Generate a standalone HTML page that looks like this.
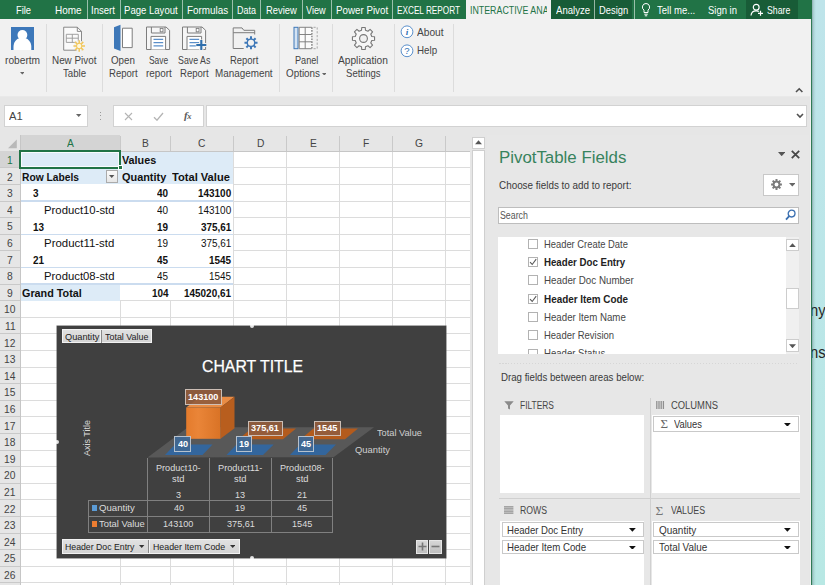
<!DOCTYPE html>
<html lang="en"><head><meta charset="utf-8"><title>Excel - PivotTable Fields</title>
<style>
html,body{margin:0;padding:0}
body{width:825px;height:585px;overflow:hidden;position:relative;background:#e6e6e6;font-family:"Liberation Sans",sans-serif;color:#444}
.a{position:absolute}
.t{position:absolute;white-space:nowrap;line-height:1;transform-origin:0 0}
</style></head>
<body>
<div class="a" style="left:811px;top:0px;width:14px;height:585px;background:linear-gradient(180deg,#bee4ea 0,#bbe6e8 45%,#b8e8e4 100%);"></div>
<div class="a" style="left:811.9px;top:0px;width:4.1px;height:585px;background:linear-gradient(90deg,rgba(70,100,95,.42) 0,rgba(90,130,125,.16) 45%,rgba(120,160,155,0) 100%);"></div>
<div class="t" style="left:810.3px;top:303px;font-size:15.6px;transform:scaleX(0.95);color:#262626;">ny</div>
<div class="t" style="left:810.3px;top:345px;font-size:15.6px;transform:scaleX(0.95);color:#262626;">nsi</div>
<div class="a" style="left:0px;top:0px;width:812px;height:19px;background:#217346;"></div>
<div class="a" style="left:551px;top:0px;width:81px;height:19px;background:#185c37;"></div>
<div class="a" style="left:746px;top:0px;width:51.7px;height:19px;background:#185c37;"></div>
<div class="a" style="left:466px;top:0px;width:85px;height:19.5px;background:#f1f1f1;overflow:hidden;"></div>
<div class="t" style="left:15.7px;top:5.6px;font-size:10.4px;transform:scaleX(0.9);color:#fff;">File</div>
<div class="t" style="left:55px;top:5.6px;font-size:10.4px;transform:scaleX(0.96);color:#fff;">Home</div>
<div class="t" style="left:91px;top:5.6px;font-size:10.4px;transform:scaleX(0.92);color:#fff;">Insert</div>
<div class="t" style="left:124px;top:5.6px;font-size:10.4px;transform:scaleX(0.92);color:#fff;">Page Layout</div>
<div class="t" style="left:187.3px;top:5.6px;font-size:10.4px;transform:scaleX(0.95);color:#fff;">Formulas</div>
<div class="t" style="left:237px;top:5.6px;font-size:10.4px;transform:scaleX(0.86);color:#fff;">Data</div>
<div class="t" style="left:266px;top:5.6px;font-size:10.4px;transform:scaleX(0.9);color:#fff;">Review</div>
<div class="t" style="left:306px;top:5.6px;font-size:10.4px;transform:scaleX(0.88);color:#fff;">View</div>
<div class="t" style="left:335.7px;top:5.6px;font-size:10.4px;transform:scaleX(0.94);color:#fff;">Power Pivot</div>
<div class="t" style="left:397.3px;top:5.6px;font-size:10.4px;transform:scaleX(0.79);color:#fff;">EXCEL REPORT</div>
<div class="t" style="left:556px;top:5.6px;font-size:10.4px;transform:scaleX(0.92);color:#fff;">Analyze</div>
<div class="t" style="left:599.3px;top:5.6px;font-size:10.4px;transform:scaleX(0.9);color:#fff;">Design</div>
<div class="t" style="left:656.7px;top:5.6px;font-size:10.4px;transform:scaleX(0.92);color:#fff;">Tell me...</div>
<div class="t" style="left:707.7px;top:5.6px;font-size:10.4px;transform:scaleX(0.91);color:#fff;">Sign in</div>
<div class="t" style="left:767.3px;top:5.6px;font-size:10.4px;transform:scaleX(0.84);color:#fff;">Share</div>
<div class="a" style="left:466px;top:0;width:81.4px;height:19px;overflow:hidden;"><div class="t" style="left:4px;top:5.6px;font-size:10.4px;color:#217346;transform:scaleX(0.85);">INTERACTIVE ANALYSIS</div></div>
<div class="a" style="left:86.8px;top:0px;width:1px;height:19px;background:rgba(255,255,255,.55);"></div>
<div class="a" style="left:119.8px;top:0px;width:1px;height:19px;background:rgba(255,255,255,.55);"></div>
<div class="a" style="left:181.8px;top:0px;width:1px;height:19px;background:rgba(255,255,255,.55);"></div>
<div class="a" style="left:231.8px;top:0px;width:1px;height:19px;background:rgba(255,255,255,.55);"></div>
<div class="a" style="left:260.2px;top:0px;width:1px;height:19px;background:rgba(255,255,255,.55);"></div>
<div class="a" style="left:301.8px;top:0px;width:1px;height:19px;background:rgba(255,255,255,.55);"></div>
<div class="a" style="left:331.2px;top:0px;width:1px;height:19px;background:rgba(255,255,255,.55);"></div>
<div class="a" style="left:391.8px;top:0px;width:1px;height:19px;background:rgba(255,255,255,.55);"></div>
<div class="a" style="left:593.8px;top:0px;width:1px;height:19px;background:rgba(255,255,255,.55);"></div>
<div class="a" style="left:633.8px;top:0px;width:1px;height:19px;background:rgba(255,255,255,.55);"></div>
<svg class="a" style="left:640px;top:2px" width="12" height="16" viewBox="0 0 12 16"><path d="M6 1.5a3.6 3.6 0 0 0-2 6.6V10.5h4V8.1a3.6 3.6 0 0 0-2-6.6z" fill="none" stroke="#fff" stroke-width="1"/><path d="M4.3 12.2h3.4M4.8 13.8h2.4" stroke="#fff" stroke-width="1"/></svg>
<svg class="a" style="left:750px;top:3px" width="14" height="14" viewBox="0 0 14 14"><circle cx="6.2" cy="4.2" r="2.9" fill="none" stroke="#fff" stroke-width="1.2"/><path d="M1 12.5c.3-3 2.2-4.6 5.2-4.6 1 0 1.9.2 2.6.6" fill="none" stroke="#fff" stroke-width="1.2"/><path d="M10.5 7.8v5M8 10.3h5" stroke="#fff" stroke-width="1.2"/></svg>
<div class="a" style="left:0px;top:19px;width:810.5px;height:77px;background:#f1f1f1;"></div>
<div class="a" style="left:0px;top:95.6px;width:810.5px;height:1px;background:#e9e9e9;"></div>
<div class="a" style="left:45.7px;top:24px;width:1px;height:68px;background:#dcdcdc;"></div>
<div class="a" style="left:102px;top:24px;width:1px;height:68px;background:#dcdcdc;"></div>
<div class="a" style="left:279px;top:24px;width:1px;height:68px;background:#dcdcdc;"></div>
<div class="a" style="left:332px;top:24px;width:1px;height:68px;background:#dcdcdc;"></div>
<div class="a" style="left:394px;top:24px;width:1px;height:68px;background:#dcdcdc;"></div>
<div class="a" style="left:453.2px;top:24px;width:1px;height:68px;background:#dcdcdc;"></div>
<div class="t" style="left:4.5px;top:55.6px;font-size:10.4px;transform:scaleX(0.98);color:#444;">robertm</div>
<div class="t" style="left:51.7px;top:55.6px;font-size:10.4px;transform:scaleX(0.95);color:#444;">New Pivot</div>
<div class="t" style="left:62.5px;top:68.6px;font-size:10.4px;transform:scaleX(0.93);color:#444;">Table</div>
<div class="t" style="left:111px;top:55.6px;font-size:10.4px;transform:scaleX(0.94);color:#444;">Open</div>
<div class="t" style="left:108.7px;top:68.6px;font-size:10.4px;transform:scaleX(0.92);color:#444;">Report</div>
<div class="t" style="left:148.7px;top:55.6px;font-size:10.4px;transform:scaleX(0.81);color:#444;">Save</div>
<div class="t" style="left:145.7px;top:68.6px;font-size:10.4px;transform:scaleX(0.95);color:#444;">report</div>
<div class="t" style="left:177.5px;top:55.6px;font-size:10.4px;transform:scaleX(0.85);color:#444;">Save As</div>
<div class="t" style="left:180px;top:68.6px;font-size:10.4px;transform:scaleX(0.92);color:#444;">Report</div>
<div class="t" style="left:229.5px;top:55.6px;font-size:10.4px;transform:scaleX(0.91);color:#444;">Report</div>
<div class="t" style="left:215px;top:68.6px;font-size:10.4px;transform:scaleX(0.95);color:#444;">Management</div>
<div class="t" style="left:294.5px;top:55.6px;font-size:10.4px;transform:scaleX(0.88);color:#444;">Panel</div>
<div class="t" style="left:285.5px;top:68.6px;font-size:10.4px;transform:scaleX(0.95);color:#444;">Options</div>
<div class="t" style="left:338px;top:55.6px;font-size:10.4px;transform:scaleX(0.98);color:#444;">Application</div>
<div class="t" style="left:346px;top:68.6px;font-size:10.4px;transform:scaleX(0.92);color:#444;">Settings</div>
<div class="t" style="left:417px;top:27.6px;font-size:10.4px;transform:scaleX(0.98);color:#444;">About</div>
<div class="t" style="left:417px;top:45.6px;font-size:10.4px;transform:scaleX(0.94);color:#444;">Help</div>
<svg class="a" style="left:19.7px;top:72.2px" width="4.6" height="2.6"><path d="M0 0h4.6L2.3 2.6z" fill="#666"/></svg>
<svg class="a" style="left:321.7px;top:72.7px" width="4.6" height="2.6"><path d="M0 0h4.6L2.3 2.6z" fill="#666"/></svg>
<svg class="a" style="left:795px;top:86.6px" width="9" height="6"><path d="M1 5l3.2-3.2L7.4 5" fill="none" stroke="#505050" stroke-width="1.6"/></svg>
<svg class="a" style="left:11px;top:26.5px" width="23" height="23.4" viewBox="0 0 23 23.4"><rect width="23" height="23.4" fill="#3d78ba"/><circle cx="11.4" cy="8" r="4.9" fill="#fff"/><path d="M2.5 23.4v-3.6c0-4.6 3-8.2 6.2-8.6h5.4c3.2.4 6.2 4 6.2 8.6v3.6z" fill="#fff"/></svg>
<svg class="a" style="left:62px;top:25px" width="24" height="28" viewBox="0 0 24 28"><path d="M1.7 2.2h13.6l4.2 4.2v18.8H1.7z" fill="#fafafa" stroke="#7d7d7d" stroke-width=".9"/><path d="M15.3 2.2v4.2h4.2" fill="none" stroke="#7d7d7d" stroke-width=".9"/><path d="M4.3 9.3h12v8.1h-12zM4.3 13.2h12M10.3 9.3v8.1" fill="none" stroke="#979797" stroke-width=".9"/><circle cx="17.2" cy="21" r="5.4" fill="#f1f1f1"/><path d="M17.2 15.2v11.6M11.4 21h11.6M13.1 16.9l8.2 8.2M21.3 16.9l-8.2 8.2" stroke="#f1c65a" stroke-width="1.5"/><circle cx="17.2" cy="21" r="2.7" fill="#fff8dc" stroke="#f1c65a" stroke-width="1"/></svg>
<svg class="a" style="left:113px;top:24px" width="21" height="28" viewBox="0 0 21 28"><path d="M9.5 4.2h9.7v19.4H9.5z" fill="#fff" stroke="#7d7d7d" stroke-width="1"/><path d="M1 3.3L7.5 0.8v26.1L1 24.5z" fill="#3e78b8"/></svg>
<svg class="a" style="left:146px;top:26px" width="26" height="25" viewBox="0 0 26 25"><path d="M.5 1H20l3.6 3.3V23.5H.5z" fill="#f6f6f6" stroke="#7d7d7d" stroke-width="1"/><path d="M5.4 1v6h13.6V1" fill="none" stroke="#7d7d7d" stroke-width="1"/><rect x="14.2" y="2.4" width="2.8" height="3.4" fill="#fff" stroke="#7d7d7d" stroke-width=".9"/><path d="M5 23.5V10.4h14.6v13.1" fill="#fff" stroke="#7d7d7d" stroke-width="1"/><path d="M7.5 13.4h9.7M7.5 16.7h9.7M7.5 19.8h9.7" stroke="#5b8fc9" stroke-width="1.2"/></svg>
<svg class="a" style="left:181.7px;top:26px" width="26" height="25" viewBox="0 0 26 25"><path d="M.5 1H20l3.6 3.3V23.5H.5z" fill="#f6f6f6" stroke="#7d7d7d" stroke-width="1"/><path d="M5.4 1v6h13.6V1" fill="none" stroke="#7d7d7d" stroke-width="1"/><rect x="14.2" y="2.4" width="2.8" height="3.4" fill="#fff" stroke="#7d7d7d" stroke-width=".9"/><path d="M5 23.5V10.4h14.6v13.1" fill="#fff" stroke="#7d7d7d" stroke-width="1"/><path d="M7.5 13.4h9.7M7.5 16.7h9.7M7.5 19.8h9.7" stroke="#5b8fc9" stroke-width="1.2"/></svg>
<svg class="a" style="left:194px;top:37px" width="14" height="14" viewBox="0 0 14 14"><rect x="0" y="0" width="14" height="14" fill="none"/><path d="M7.3 2.5v11M1.8 8h11" stroke="#f1f1f1" stroke-width="4.2"/><path d="M7.3 3v10M2.3 8h10" stroke="#2f6fad" stroke-width="2.1"/></svg>
<svg class="a" style="left:232px;top:25px" width="28" height="27" viewBox="0 0 28 27"><path d="M1.2 23.5V2.9h8.8l1.8 2.4h10.9v4.2" fill="none" stroke="#7d7d7d" stroke-width="1"/><path d="M1.2 7.7h21.5" stroke="#7d7d7d" stroke-width="1"/><path d="M1.2 23.5h10.5" stroke="#7d7d7d" stroke-width="1"/><path d="M18.02 13.41L17.97 11.28L20.03 11.28L19.98 13.41L21.41 14.00L22.88 12.46L24.34 13.92L22.80 15.39L23.39 16.82L25.52 16.77L25.52 18.83L23.39 18.78L22.80 20.21L24.34 21.68L22.88 23.14L21.41 21.60L19.98 22.19L20.03 24.32L17.97 24.32L18.02 22.19L16.59 21.60L15.12 23.14L13.66 21.68L15.20 20.21L14.61 18.78L12.48 18.83L12.48 16.77L14.61 16.82L15.20 15.39L13.66 13.92L15.12 12.46L16.59 14.00z" fill="#3e78b8"/><circle cx="19" cy="17.8" r="3.05" fill="#f1f1f1"/></svg>
<svg class="a" style="left:293px;top:26px" width="26" height="24" viewBox="0 0 26 24"><rect x="1" y="1.3" width="4" height="21.4" fill="#d4e3f3" stroke="#3e78b8" stroke-width="1"/><path d="M18.7 1.3H6.2v21.4h12.5M12.2 1.3v21.4M6.2 8.5h12.5M6.2 15.8h12.5" fill="#fbfbfb" stroke="#7d7d7d" stroke-width=".95"/><path d="M18.9 1.3v21.4" stroke="#7d7d7d" stroke-width="1.3" stroke-dasharray="1.6 1.2"/><path d="M20.5 1.3h3.7v21.4h-3.7" fill="none" stroke="#a8a8a8" stroke-width="1" stroke-dasharray="2.2 1.6"/></svg>
<svg class="a" style="left:351px;top:25.5px" width="25" height="25" viewBox="0 0 25 25"><path d="M10.52 4.23L10.75 1.44L14.25 1.44L14.48 4.23L16.94 5.25L19.08 3.44L21.56 5.92L19.75 8.06L20.77 10.52L23.56 10.75L23.56 14.25L20.77 14.48L19.75 16.94L21.56 19.08L19.08 21.56L16.94 19.75L14.48 20.77L14.25 23.56L10.75 23.56L10.52 20.77L8.06 19.75L5.92 21.56L3.44 19.08L5.25 16.94L4.23 14.48L1.44 14.25L1.44 10.75L4.23 10.52L5.25 8.06L3.44 5.92L5.92 3.44L8.06 5.25z" fill="#f6f6f6" stroke="#777" stroke-width="1.1" stroke-linejoin="round"/><circle cx="12.5" cy="12.5" r="3.9" fill="#f1f1f1" stroke="#777" stroke-width="1.1"/></svg>
<svg class="a" style="left:400px;top:25px" width="14" height="14" viewBox="0 0 14 14"><circle cx="7" cy="6.8" r="5.9" fill="#fff" stroke="#5a90cc" stroke-width="1"/><text x="7" y="10.3" text-anchor="middle" font-family="Liberation Serif,serif" font-style="italic" font-weight="bold" font-size="9.2" fill="#2f6fb3">i</text></svg>
<svg class="a" style="left:400px;top:43.5px" width="14" height="14" viewBox="0 0 14 14"><circle cx="7" cy="6.8" r="5.9" fill="#fff" stroke="#5a90cc" stroke-width="1"/><text x="7" y="10.1" text-anchor="middle" font-family="Liberation Sans,sans-serif" font-size="9.5" fill="#2f6fb3">?</text></svg>
<div class="a" style="left:0px;top:96.6px;width:810.5px;height:38.4px;background:#e6e6e6;"></div>
<div class="a" style="left:4px;top:105.4px;width:83.7px;height:21.5px;background:#fff;box-shadow:inset 0 0 0 1px #d2d2d2;"></div>
<div class="t" style="left:9.3px;top:110.9px;font-size:10.8px;transform:scaleX(1.04);color:#444;">A1</div>
<svg class="a" style="left:76.3px;top:113.7px" width="5.4" height="3"><path d="M0 0h5.4L2.7 3z" fill="#666"/></svg>
<div class="a" style="left:99.6px;top:111.6px;width:1.2px;height:1.2px;background:#9a9a9a;"></div>
<div class="a" style="left:99.6px;top:115.2px;width:1.2px;height:1.2px;background:#9a9a9a;"></div>
<div class="a" style="left:99.6px;top:118.9px;width:1.2px;height:1.2px;background:#9a9a9a;"></div>
<div class="a" style="left:112.7px;top:105.4px;width:90.9px;height:21.5px;background:#fff;box-shadow:inset 0 0 0 1px #d2d2d2;"></div>
<svg class="a" style="left:123.7px;top:111.7px" width="9" height="9" viewBox="0 0 9 9"><path d="M1 1l7 7M8 1l-7 7" stroke="#b4b4b4" stroke-width="1.1"/></svg>
<svg class="a" style="left:153px;top:111.5px" width="11" height="9" viewBox="0 0 11 9"><path d="M1 5.2l3 3L10 1" fill="none" stroke="#b4b4b4" stroke-width="1.3"/></svg>
<div class="t" style="left:184px;top:110px;font-size:11px;font-family:'Liberation Serif',serif;font-style:italic;font-weight:bold;color:#5c5c5c;letter-spacing:-.4px;">f<span style="font-size:8.5px;">x</span></div>
<div class="a" style="left:206.4px;top:105.4px;width:600.4px;height:21.5px;background:#fff;box-shadow:inset 0 0 0 1px #d2d2d2;"></div>
<svg class="a" style="left:795.8px;top:112.8px" width="9" height="6" viewBox="0 0 9 6"><path d="M1 1l3 3L7 1" fill="none" stroke="#505050" stroke-width="1.6"/></svg>
<div class="a" style="left:0px;top:135px;width:469.6px;height:450px;background:#e6e6e6;"></div>
<div class="a" style="left:20px;top:151.2px;width:449.6px;height:433.8px;background:#fff;"></div>
<div class="a" style="left:20px;top:167.3px;width:449.6px;height:1px;background:#dcdcdc;"></div>
<div class="a" style="left:20px;top:183.9px;width:449.6px;height:1px;background:#dcdcdc;"></div>
<div class="a" style="left:20px;top:200.5px;width:449.6px;height:1px;background:#dcdcdc;"></div>
<div class="a" style="left:20px;top:217.1px;width:449.6px;height:1px;background:#dcdcdc;"></div>
<div class="a" style="left:20px;top:233.7px;width:449.6px;height:1px;background:#dcdcdc;"></div>
<div class="a" style="left:20px;top:250.3px;width:449.6px;height:1px;background:#dcdcdc;"></div>
<div class="a" style="left:20px;top:266.9px;width:449.6px;height:1px;background:#dcdcdc;"></div>
<div class="a" style="left:20px;top:283.5px;width:449.6px;height:1px;background:#dcdcdc;"></div>
<div class="a" style="left:20px;top:300.1px;width:449.6px;height:1px;background:#dcdcdc;"></div>
<div class="a" style="left:20px;top:316.7px;width:449.6px;height:1px;background:#dcdcdc;"></div>
<div class="a" style="left:20px;top:333.3px;width:449.6px;height:1px;background:#dcdcdc;"></div>
<div class="a" style="left:20px;top:349.9px;width:449.6px;height:1px;background:#dcdcdc;"></div>
<div class="a" style="left:20px;top:366.5px;width:449.6px;height:1px;background:#dcdcdc;"></div>
<div class="a" style="left:20px;top:383.1px;width:449.6px;height:1px;background:#dcdcdc;"></div>
<div class="a" style="left:20px;top:399.7px;width:449.6px;height:1px;background:#dcdcdc;"></div>
<div class="a" style="left:20px;top:416.3px;width:449.6px;height:1px;background:#dcdcdc;"></div>
<div class="a" style="left:20px;top:432.9px;width:449.6px;height:1px;background:#dcdcdc;"></div>
<div class="a" style="left:20px;top:449.5px;width:449.6px;height:1px;background:#dcdcdc;"></div>
<div class="a" style="left:20px;top:466.1px;width:449.6px;height:1px;background:#dcdcdc;"></div>
<div class="a" style="left:20px;top:482.7px;width:449.6px;height:1px;background:#dcdcdc;"></div>
<div class="a" style="left:20px;top:499.3px;width:449.6px;height:1px;background:#dcdcdc;"></div>
<div class="a" style="left:20px;top:515.9px;width:449.6px;height:1px;background:#dcdcdc;"></div>
<div class="a" style="left:20px;top:532.5px;width:449.6px;height:1px;background:#dcdcdc;"></div>
<div class="a" style="left:20px;top:549.1px;width:449.6px;height:1px;background:#dcdcdc;"></div>
<div class="a" style="left:20px;top:565.7px;width:449.6px;height:1px;background:#dcdcdc;"></div>
<div class="a" style="left:20px;top:582.3px;width:449.6px;height:1px;background:#dcdcdc;"></div>
<div class="a" style="left:20px;top:598.9px;width:449.6px;height:1px;background:#dcdcdc;"></div>
<div class="a" style="left:119.5px;top:151.2px;width:1px;height:433.8px;background:#dcdcdc;"></div>
<div class="a" style="left:169.8px;top:151.2px;width:1px;height:433.8px;background:#dcdcdc;"></div>
<div class="a" style="left:233.3px;top:151.2px;width:1px;height:433.8px;background:#dcdcdc;"></div>
<div class="a" style="left:286.2px;top:151.2px;width:1px;height:433.8px;background:#dcdcdc;"></div>
<div class="a" style="left:339.1px;top:151.2px;width:1px;height:433.8px;background:#dcdcdc;"></div>
<div class="a" style="left:392px;top:151.2px;width:1px;height:433.8px;background:#dcdcdc;"></div>
<div class="a" style="left:444.9px;top:151.2px;width:1px;height:433.8px;background:#dcdcdc;"></div>
<div class="a" style="left:20px;top:151.2px;width:213.3px;height:148.9px;background:#fff;"></div>
<div class="a" style="left:20px;top:151.2px;width:213.3px;height:33.2px;background:#ddebf7;"></div>
<div class="a" style="left:20px;top:284px;width:100px;height:16.6px;background:#ddebf7;"></div>
<div class="a" style="left:20px;top:200.4px;width:213.3px;height:1.2px;background:#cbdcef;"></div>
<div class="a" style="left:20px;top:233.6px;width:213.3px;height:1.2px;background:#cbdcef;"></div>
<div class="a" style="left:20px;top:266.8px;width:213.3px;height:1.2px;background:#cbdcef;"></div>
<div class="a" style="left:20px;top:283.4px;width:213.3px;height:1.2px;background:#cbdcef;"></div>
<div class="a" style="left:20px;top:135px;width:100px;height:16.2px;background:#d4d4d4;"></div>
<div class="a" style="left:20px;top:149.6px;width:100.5px;height:1.6px;background:#217346;"></div>
<div class="a" style="left:119.5px;top:136px;width:1px;height:15.2px;background:#c9c9c9;"></div>
<div class="a" style="left:169.8px;top:136px;width:1px;height:15.2px;background:#c9c9c9;"></div>
<div class="a" style="left:233.3px;top:136px;width:1px;height:15.2px;background:#c9c9c9;"></div>
<div class="a" style="left:286.2px;top:136px;width:1px;height:15.2px;background:#c9c9c9;"></div>
<div class="a" style="left:339.1px;top:136px;width:1px;height:15.2px;background:#c9c9c9;"></div>
<div class="a" style="left:392px;top:136px;width:1px;height:15.2px;background:#c9c9c9;"></div>
<div class="a" style="left:444.9px;top:136px;width:1px;height:15.2px;background:#c9c9c9;"></div>
<div class="a" style="left:0px;top:150.7px;width:469.6px;height:1px;background:#c6c6c6;"></div>
<div class="a" style="left:19.5px;top:135px;width:1px;height:450px;background:#c6c6c6;"></div>
<div class="a" style="left:20px;top:149.6px;width:100.5px;height:1.6px;background:#217346;"></div>
<div class="t" style="left:66.58px;top:137.9px;font-size:10.8px;transform:scaleX(0.95);color:#217346;">A</div>
<div class="t" style="left:141.78px;top:137.9px;font-size:10.8px;transform:scaleX(0.95);color:#444;">B</div>
<div class="t" style="left:198.3px;top:137.9px;font-size:10.8px;transform:scaleX(0.95);color:#444;">C</div>
<div class="t" style="left:256.5px;top:137.9px;font-size:10.8px;transform:scaleX(0.95);color:#444;">D</div>
<div class="t" style="left:309.78px;top:137.9px;font-size:10.8px;transform:scaleX(0.95);color:#444;">E</div>
<div class="t" style="left:362.87px;top:137.9px;font-size:10.8px;transform:scaleX(0.95);color:#444;">F</div>
<div class="t" style="left:415.01px;top:137.9px;font-size:10.8px;transform:scaleX(0.95);color:#444;">G</div>
<svg class="a" style="left:6px;top:138.6px" width="12" height="10" viewBox="0 0 12 10"><path d="M10.8 0.6V9.2H2z" fill="#b9b9b9"/></svg>
<div class="a" style="left:0px;top:151.2px;width:19.5px;height:16.6px;background:#d4d4d4;"></div>
<div class="t" style="left:7.15px;top:154.9px;font-size:10.8px;transform:scaleX(0.95);color:#217346;">1</div>
<div class="a" style="left:0px;top:167.3px;width:19.5px;height:1px;background:#c9c9c9;"></div>
<div class="t" style="left:7.15px;top:171.9px;font-size:10.8px;transform:scaleX(0.95);color:#444;">2</div>
<div class="a" style="left:0px;top:183.9px;width:19.5px;height:1px;background:#c9c9c9;"></div>
<div class="t" style="left:7.15px;top:187.9px;font-size:10.8px;transform:scaleX(0.95);color:#444;">3</div>
<div class="a" style="left:0px;top:200.5px;width:19.5px;height:1px;background:#c9c9c9;"></div>
<div class="t" style="left:7.15px;top:204.9px;font-size:10.8px;transform:scaleX(0.95);color:#444;">4</div>
<div class="a" style="left:0px;top:217.1px;width:19.5px;height:1px;background:#c9c9c9;"></div>
<div class="t" style="left:7.15px;top:220.9px;font-size:10.8px;transform:scaleX(0.95);color:#444;">5</div>
<div class="a" style="left:0px;top:233.7px;width:19.5px;height:1px;background:#c9c9c9;"></div>
<div class="t" style="left:7.15px;top:237.9px;font-size:10.8px;transform:scaleX(0.95);color:#444;">6</div>
<div class="a" style="left:0px;top:250.3px;width:19.5px;height:1px;background:#c9c9c9;"></div>
<div class="t" style="left:7.15px;top:254.9px;font-size:10.8px;transform:scaleX(0.95);color:#444;">7</div>
<div class="a" style="left:0px;top:266.9px;width:19.5px;height:1px;background:#c9c9c9;"></div>
<div class="t" style="left:7.15px;top:270.9px;font-size:10.8px;transform:scaleX(0.95);color:#444;">8</div>
<div class="a" style="left:0px;top:283.5px;width:19.5px;height:1px;background:#c9c9c9;"></div>
<div class="t" style="left:7.15px;top:287.9px;font-size:10.8px;transform:scaleX(0.95);color:#444;">9</div>
<div class="a" style="left:0px;top:300.1px;width:19.5px;height:1px;background:#c9c9c9;"></div>
<div class="t" style="left:4.29px;top:303.9px;font-size:10.8px;transform:scaleX(0.95);color:#444;">10</div>
<div class="a" style="left:0px;top:316.7px;width:19.5px;height:1px;background:#c9c9c9;"></div>
<div class="t" style="left:4.67px;top:320.9px;font-size:10.8px;transform:scaleX(0.95);color:#444;">11</div>
<div class="a" style="left:0px;top:333.3px;width:19.5px;height:1px;background:#c9c9c9;"></div>
<div class="t" style="left:4.29px;top:337.9px;font-size:10.8px;transform:scaleX(0.95);color:#444;">12</div>
<div class="a" style="left:0px;top:349.9px;width:19.5px;height:1px;background:#c9c9c9;"></div>
<div class="t" style="left:4.29px;top:353.9px;font-size:10.8px;transform:scaleX(0.95);color:#444;">13</div>
<div class="a" style="left:0px;top:366.5px;width:19.5px;height:1px;background:#c9c9c9;"></div>
<div class="t" style="left:4.29px;top:370.9px;font-size:10.8px;transform:scaleX(0.95);color:#444;">14</div>
<div class="a" style="left:0px;top:383.1px;width:19.5px;height:1px;background:#c9c9c9;"></div>
<div class="t" style="left:4.29px;top:386.9px;font-size:10.8px;transform:scaleX(0.95);color:#444;">15</div>
<div class="a" style="left:0px;top:399.7px;width:19.5px;height:1px;background:#c9c9c9;"></div>
<div class="t" style="left:4.29px;top:403.9px;font-size:10.8px;transform:scaleX(0.95);color:#444;">16</div>
<div class="a" style="left:0px;top:416.3px;width:19.5px;height:1px;background:#c9c9c9;"></div>
<div class="t" style="left:4.29px;top:420.9px;font-size:10.8px;transform:scaleX(0.95);color:#444;">17</div>
<div class="a" style="left:0px;top:432.9px;width:19.5px;height:1px;background:#c9c9c9;"></div>
<div class="t" style="left:4.29px;top:436.9px;font-size:10.8px;transform:scaleX(0.95);color:#444;">18</div>
<div class="a" style="left:0px;top:449.5px;width:19.5px;height:1px;background:#c9c9c9;"></div>
<div class="t" style="left:4.29px;top:453.9px;font-size:10.8px;transform:scaleX(0.95);color:#444;">19</div>
<div class="a" style="left:0px;top:466.1px;width:19.5px;height:1px;background:#c9c9c9;"></div>
<div class="t" style="left:4.29px;top:469.9px;font-size:10.8px;transform:scaleX(0.95);color:#444;">20</div>
<div class="a" style="left:0px;top:482.7px;width:19.5px;height:1px;background:#c9c9c9;"></div>
<div class="t" style="left:4.29px;top:486.9px;font-size:10.8px;transform:scaleX(0.95);color:#444;">21</div>
<div class="a" style="left:0px;top:499.3px;width:19.5px;height:1px;background:#c9c9c9;"></div>
<div class="t" style="left:4.29px;top:503.9px;font-size:10.8px;transform:scaleX(0.95);color:#444;">22</div>
<div class="a" style="left:0px;top:515.9px;width:19.5px;height:1px;background:#c9c9c9;"></div>
<div class="t" style="left:4.29px;top:519.9px;font-size:10.8px;transform:scaleX(0.95);color:#444;">23</div>
<div class="a" style="left:0px;top:532.5px;width:19.5px;height:1px;background:#c9c9c9;"></div>
<div class="t" style="left:4.29px;top:536.9px;font-size:10.8px;transform:scaleX(0.95);color:#444;">24</div>
<div class="a" style="left:0px;top:549.1px;width:19.5px;height:1px;background:#c9c9c9;"></div>
<div class="t" style="left:4.29px;top:552.9px;font-size:10.8px;transform:scaleX(0.95);color:#444;">25</div>
<div class="a" style="left:0px;top:565.7px;width:19.5px;height:1px;background:#c9c9c9;"></div>
<div class="t" style="left:4.29px;top:569.9px;font-size:10.8px;transform:scaleX(0.95);color:#444;">26</div>
<div class="a" style="left:0px;top:582.3px;width:19.5px;height:1px;background:#c9c9c9;"></div>
<div class="t" style="left:121.7px;top:154.95px;font-size:10.7px;transform:scaleX(1.01);color:#111;font-weight:bold;">Values</div>
<div class="t" style="left:22px;top:171.95px;font-size:10.7px;transform:scaleX(0.96);color:#111;font-weight:bold;">Row Labels</div>
<div class="t" style="left:121.7px;top:171.95px;font-size:10.7px;transform:scaleX(1.02);color:#111;font-weight:bold;">Quantity</div>
<div class="t" style="left:172.3px;top:171.95px;font-size:10.7px;transform:scaleX(1.04);color:#111;font-weight:bold;">Total Value</div>
<div class="a" style="left:105.6px;top:170.2px;width:12.6px;height:12.4px;box-shadow:inset 0 0 0 1px #ababab;background:linear-gradient(#fdfdfd,#e4e4e4);"></div>
<svg class="a" style="left:109.3px;top:175.3px" width="5.4" height="3"><path d="M0 0h5.4L2.7 3z" fill="#555"/></svg>
<div class="t" style="left:33.3px;top:187.95px;font-size:10.7px;transform:scaleX(0.93);color:#111;font-weight:bold;">3</div>
<div class="t" style="left:157.13px;top:187.95px;font-size:10.7px;transform:scaleX(0.93);color:#111;font-weight:bold;">40</div>
<div class="t" style="left:198.29px;top:187.95px;font-size:10.7px;transform:scaleX(0.93);color:#111;font-weight:bold;">143100</div>
<div class="t" style="left:44.3px;top:204.95px;font-size:10.7px;transform:scaleX(1.06);color:#111;">Product10-std</div>
<div class="t" style="left:157.13px;top:204.95px;font-size:10.7px;transform:scaleX(0.93);color:#111;">40</div>
<div class="t" style="left:198.29px;top:204.95px;font-size:10.7px;transform:scaleX(0.93);color:#111;">143100</div>
<div class="t" style="left:33.3px;top:221.95px;font-size:10.7px;transform:scaleX(0.93);color:#111;font-weight:bold;">13</div>
<div class="t" style="left:157.13px;top:221.95px;font-size:10.7px;transform:scaleX(0.93);color:#111;font-weight:bold;">19</div>
<div class="t" style="left:201.06px;top:221.95px;font-size:10.7px;transform:scaleX(0.93);color:#111;font-weight:bold;">375,61</div>
<div class="t" style="left:44.3px;top:237.95px;font-size:10.7px;transform:scaleX(1.07);color:#111;">Product11-std</div>
<div class="t" style="left:157.13px;top:237.95px;font-size:10.7px;transform:scaleX(0.93);color:#111;">19</div>
<div class="t" style="left:201.06px;top:237.95px;font-size:10.7px;transform:scaleX(0.93);color:#111;">375,61</div>
<div class="t" style="left:33.3px;top:254.95px;font-size:10.7px;transform:scaleX(0.93);color:#111;font-weight:bold;">21</div>
<div class="t" style="left:157.13px;top:254.95px;font-size:10.7px;transform:scaleX(0.93);color:#111;font-weight:bold;">45</div>
<div class="t" style="left:209.36px;top:254.95px;font-size:10.7px;transform:scaleX(0.93);color:#111;font-weight:bold;">1545</div>
<div class="t" style="left:44.3px;top:270.95px;font-size:10.7px;transform:scaleX(1.06);color:#111;">Product08-std</div>
<div class="t" style="left:157.13px;top:270.95px;font-size:10.7px;transform:scaleX(0.93);color:#111;">45</div>
<div class="t" style="left:209.36px;top:270.95px;font-size:10.7px;transform:scaleX(0.93);color:#111;">1545</div>
<div class="t" style="left:22px;top:287.95px;font-size:10.7px;transform:scaleX(1.01);color:#111;font-weight:bold;">Grand Total</div>
<div class="t" style="left:151.6px;top:287.95px;font-size:10.7px;transform:scaleX(0.93);color:#111;font-weight:bold;">104</div>
<div class="t" style="left:184.46px;top:287.95px;font-size:10.7px;transform:scaleX(0.93);color:#111;font-weight:bold;">145020,61</div>
<div class="a" style="left:18.9px;top:150px;width:102.3px;height:18.6px;border:2px solid #217346;box-sizing:border-box;box-shadow:inset 0 0 0 .9px rgba(255,255,255,.85);"></div>
<div class="a" style="left:117.6px;top:165px;width:5.2px;height:5.2px;background:#217346;border:1px solid #fff;box-sizing:border-box;"></div>
<div class="a" style="left:469.6px;top:135px;width:17.4px;height:450px;background:#e6e6e6;"></div>
<div class="a" style="left:472px;top:136.6px;width:12.6px;height:12.2px;background:#fff;box-shadow:inset 0 0 0 1px #cfcfcf;"></div>
<svg class="a" style="left:474.8px;top:140.4px" width="7" height="4.4" viewBox="0 0 7 4.4"><path d="M0 4.2L3.5 .3l3.5 3.9z" fill="#555"/></svg>
<div class="a" style="left:472px;top:150px;width:12.6px;height:440px;background:#fff;box-shadow:inset 0 0 0 1px #cfcfcf;"></div>
<div class="a" style="left:486.6px;top:135px;width:0.8px;height:450px;background:#cdcdcd;"></div>
<div class="a" style="left:56.7px;top:326px;width:389.8px;height:231.5px;background:#404040;box-shadow:0 0 0 .5px #5a5a5a;"></div>
<svg class="a" style="left:0;top:0" width="470" height="585" viewBox="0 0 470 585"><defs><linearGradient id="og" x1="0" y1="0" x2="1" y2="0"><stop offset="0" stop-color="#e47b2c"/><stop offset=".35" stop-color="#ea8538"/><stop offset="1" stop-color="#d97326"/></linearGradient></defs>
<polygon points="147.5,457.6 333.5,457.2 374,427.2 188,427.2" fill="#585858"/>
<polygon points="165,455 202.5,455 212.5,444.5 175,444.5" fill="#33669d"/>
<polygon points="226.5,455 263,455 273.7,444.5 236.5,444.5" fill="#33669d"/>
<polygon points="290,455 325.5,455 336,444.5 300,444.5" fill="#33669d"/>
<polygon points="238.5,439.3 283,439.3 296,428.4 251.5,428.4" fill="#b35b1d"/>
<polygon points="300.5,439.3 345,439.3 358,428.4 313.5,428.4" fill="#b35b1d"/>
<polygon points="186.2,407.5 220.5,407.5 234.5,396.8 200.2,396.8" fill="#e98c45"/>
<polygon points="220.5,407.5 234.5,396.8 234.5,428.2 220.5,438.8" fill="#b85e1e"/>
<rect x="186.2" y="407.5" width="34.3" height="31.3" fill="url(#og)"/>
</svg>
<div class="a" style="left:185px;top:388.7px;width:37px;height:16.3px;background:rgba(146,93,60,.93);box-shadow:inset 0 0 0 1px rgba(228,228,228,.72);"></div>
<div class="t" style="left:188.28px;top:392px;font-size:9.6px;transform:scaleX(0.95);color:#fff;font-weight:bold;">143100</div>
<div class="a" style="left:248px;top:420.5px;width:34.5px;height:15.2px;background:rgba(146,93,60,.93);box-shadow:inset 0 0 0 1px rgba(228,228,228,.72);"></div>
<div class="t" style="left:251.3px;top:423px;font-size:9.6px;transform:scaleX(0.95);color:#fff;font-weight:bold;">375,61</div>
<div class="a" style="left:313.7px;top:420.8px;width:27px;height:14.9px;background:rgba(146,93,60,.93);box-shadow:inset 0 0 0 1px rgba(228,228,228,.72);"></div>
<div class="t" style="left:317.06px;top:423px;font-size:9.6px;transform:scaleX(0.95);color:#fff;font-weight:bold;">1545</div>
<div class="a" style="left:174.2px;top:436.2px;width:17px;height:15.8px;background:rgba(64,104,148,.93);box-shadow:inset 0 0 0 1px rgba(228,228,228,.72);"></div>
<div class="t" style="left:177.63px;top:439px;font-size:9.6px;transform:scaleX(0.95);color:#fff;font-weight:bold;">40</div>
<div class="a" style="left:235.7px;top:436.2px;width:16.8px;height:15.8px;background:rgba(64,104,148,.93);box-shadow:inset 0 0 0 1px rgba(228,228,228,.72);"></div>
<div class="t" style="left:239.03px;top:439px;font-size:9.6px;transform:scaleX(0.95);color:#fff;font-weight:bold;">19</div>
<div class="a" style="left:297.5px;top:436.2px;width:16.5px;height:15.8px;background:rgba(64,104,148,.93);box-shadow:inset 0 0 0 1px rgba(228,228,228,.72);"></div>
<div class="t" style="left:300.68px;top:439px;font-size:9.6px;transform:scaleX(0.95);color:#fff;font-weight:bold;">45</div>
<div class="a" style="left:62px;top:329.2px;width:39.4px;height:13.8px;box-shadow:inset 0 0 0 1px #f2f2f2;background:linear-gradient(#e2e2e2,#d2d2d2);"></div>
<div class="a" style="left:101.4px;top:329.2px;width:50.6px;height:13.8px;box-shadow:inset 0 0 0 1px #f2f2f2;background:linear-gradient(#e2e2e2,#d2d2d2);"></div>
<div class="t" style="left:65px;top:332px;font-size:9.6px;transform:scaleX(0.96);color:#222;">Quantity</div>
<div class="t" style="left:105px;top:332px;font-size:9.6px;transform:scaleX(0.93);color:#222;">Total Value</div>
<div class="a" style="left:101px;top:329.8px;width:0.8px;height:12.8px;background:#8a8a8a;"></div>
<div class="t" style="left:201.7px;top:357.6px;font-size:17.4px;transform:scaleX(0.91);color:#fff;-webkit-text-stroke:.25px #fff;">CHART TITLE</div>
<div class="t" style="left:86.6px;top:438.3px;font-size:9.8px;color:#dadada;transform:translate(-50%,-50%) rotate(-90deg) scaleX(0.92);transform-origin:50% 50%;">Axis Title</div>
<div class="t" style="left:377px;top:427.9px;font-size:9.8px;transform:scaleX(0.94);color:#d0d0d0;">Total Value</div>
<div class="t" style="left:355px;top:444.9px;font-size:9.8px;transform:scaleX(0.96);color:#d0d0d0;">Quantity</div>
<div class="a" style="left:147.3px;top:457.6px;width:1px;height:74.4px;background:#808080;"></div>
<div class="a" style="left:209px;top:457.6px;width:1px;height:74.4px;background:#808080;"></div>
<div class="a" style="left:270.9px;top:457.6px;width:1px;height:74.4px;background:#808080;"></div>
<div class="a" style="left:332px;top:457.6px;width:1px;height:74.4px;background:#808080;"></div>
<div class="a" style="left:87.5px;top:500.7px;width:1px;height:31.3px;background:#808080;"></div>
<div class="a" style="left:88px;top:500.2px;width:245px;height:1px;background:#808080;"></div>
<div class="a" style="left:88px;top:515.8px;width:245px;height:1px;background:#808080;"></div>
<div class="a" style="left:88px;top:531.5px;width:245px;height:1px;background:#808080;"></div>
<div class="t" style="left:156.45px;top:462.9px;font-size:9.8px;transform:scaleX(0.93);color:#dcdcdc;">Product10-</div>
<div class="t" style="left:172.49px;top:473.9px;font-size:9.8px;transform:scaleX(0.95);color:#dcdcdc;">std</div>
<div class="t" style="left:176.17px;top:489.9px;font-size:9.8px;transform:scaleX(0.93);color:#dcdcdc;">3</div>
<div class="t" style="left:173.63px;top:502.9px;font-size:9.8px;transform:scaleX(0.93);color:#dcdcdc;">40</div>
<div class="t" style="left:163.49px;top:518.9px;font-size:9.8px;transform:scaleX(0.93);color:#dcdcdc;">143100</div>
<div class="t" style="left:218.25px;top:462.9px;font-size:9.8px;transform:scaleX(0.94);color:#dcdcdc;">Product11-</div>
<div class="t" style="left:234.29px;top:473.9px;font-size:9.8px;transform:scaleX(0.95);color:#dcdcdc;">std</div>
<div class="t" style="left:235.43px;top:489.9px;font-size:9.8px;transform:scaleX(0.93);color:#dcdcdc;">13</div>
<div class="t" style="left:235.43px;top:502.9px;font-size:9.8px;transform:scaleX(0.93);color:#dcdcdc;">19</div>
<div class="t" style="left:226.56px;top:518.9px;font-size:9.8px;transform:scaleX(0.93);color:#dcdcdc;">375,61</div>
<div class="t" style="left:279.75px;top:462.9px;font-size:9.8px;transform:scaleX(0.93);color:#dcdcdc;">Product08-</div>
<div class="t" style="left:295.79px;top:473.9px;font-size:9.8px;transform:scaleX(0.95);color:#dcdcdc;">std</div>
<div class="t" style="left:296.93px;top:489.9px;font-size:9.8px;transform:scaleX(0.93);color:#dcdcdc;">21</div>
<div class="t" style="left:296.93px;top:502.9px;font-size:9.8px;transform:scaleX(0.93);color:#dcdcdc;">45</div>
<div class="t" style="left:291.86px;top:518.9px;font-size:9.8px;transform:scaleX(0.93);color:#dcdcdc;">1545</div>
<div class="a" style="left:91.6px;top:505.3px;width:5.8px;height:6px;background:#5b9bd5;"></div>
<div class="a" style="left:91.6px;top:520.8px;width:5.8px;height:6px;background:#ed7d31;"></div>
<div class="t" style="left:98.8px;top:502.9px;font-size:9.8px;transform:scaleX(0.98);color:#dcdcdc;">Quantity</div>
<div class="t" style="left:98.8px;top:518.9px;font-size:9.8px;transform:scaleX(0.96);color:#dcdcdc;">Total Value</div>
<div class="a" style="left:62px;top:539.3px;width:86.8px;height:14.5px;box-shadow:inset 0 0 0 1px #f2f2f2;background:linear-gradient(#e2e2e2,#d2d2d2);"></div>
<div class="a" style="left:148.8px;top:539.3px;width:90.8px;height:14.5px;box-shadow:inset 0 0 0 1px #f2f2f2;background:linear-gradient(#e2e2e2,#d2d2d2);"></div>
<div class="a" style="left:148.4px;top:539.8px;width:0.8px;height:13.6px;background:#8a8a8a;"></div>
<div class="t" style="left:65px;top:542px;font-size:9.6px;transform:scaleX(0.91);color:#222;">Header Doc Entry</div>
<div class="t" style="left:153px;top:542px;font-size:9.6px;transform:scaleX(0.92);color:#222;">Header Item Code</div>
<svg class="a" style="left:139.3px;top:545.3px" width="5.4" height="3"><path d="M0 0h5.4L2.7 3z" fill="#333"/></svg>
<svg class="a" style="left:229.8px;top:545.3px" width="5.4" height="3"><path d="M0 0h5.4L2.7 3z" fill="#333"/></svg>
<div class="a" style="left:416px;top:539.8px;width:12.2px;height:14px;box-shadow:inset 0 0 0 1px #e6e6e6;background:linear-gradient(#d8d8d8,#bdbdbd);"></div>
<div class="a" style="left:428.6px;top:539.8px;width:13px;height:14px;box-shadow:inset 0 0 0 1px #e6e6e6;background:linear-gradient(#d8d8d8,#bdbdbd);"></div>
<svg class="a" style="left:417.6px;top:542.3px" width="9" height="9" viewBox="0 0 9 9"><path d="M4.5 .5v8M.5 4.5h8" stroke="#777" stroke-width="1.6"/></svg>
<svg class="a" style="left:430.6px;top:542.3px" width="9" height="9" viewBox="0 0 9 9"><path d="M.5 4.5h8" stroke="#777" stroke-width="1.6"/></svg>
<div class="a" style="left:250px;top:324px;width:4px;height:4px;background:#fff;border-radius:50%;opacity:.85;"></div>
<div class="a" style="left:54.7px;top:439.7px;width:4px;height:4px;background:#fff;border-radius:50%;opacity:.85;"></div>
<div class="a" style="left:250px;top:555.5px;width:4px;height:4px;background:#fff;border-radius:50%;opacity:.85;"></div>
<div class="a" style="left:487.4px;top:135px;width:322.1px;height:450px;background:#e7e7e7;"></div>
<div class="t" style="left:499px;top:148.7px;font-size:17.2px;transform:scaleX(0.98);color:#37835d;">PivotTable Fields</div>
<svg class="a" style="left:778.1px;top:152.3px" width="7.4" height="4.2"><path d="M0 0h7.4L3.7 4.2z" fill="#555"/></svg>
<svg class="a" style="left:791.4px;top:149.8px" width="9" height="9" viewBox="0 0 9 9"><path d="M.8 .8l7.4 7.4M8.2 .8l-7.4 7.4" stroke="#484848" stroke-width="1.8"/></svg>
<div class="t" style="left:499px;top:180.7px;font-size:10.2px;transform:scaleX(0.97);color:#3a3a3a;">Choose fields to add to report:</div>
<div class="a" style="left:763px;top:173.8px;width:36px;height:22px;background:#fff;box-shadow:inset 0 0 0 1px #c8c8c8;"></div>
<svg class="a" style="left:771px;top:179.4px" width="11" height="11" viewBox="0 0 11 11"><path d="M4.47 1.63L4.51 0.09L6.49 0.09L6.53 1.63L7.51 2.04L8.63 0.98L10.02 2.37L8.96 3.49L9.37 4.47L10.91 4.51L10.91 6.49L9.37 6.53L8.96 7.51L10.02 8.63L8.63 10.02L7.51 8.96L6.53 9.37L6.49 10.91L4.51 10.91L4.47 9.37L3.49 8.96L2.37 10.02L0.98 8.63L2.04 7.51L1.63 6.53L0.09 6.49L0.09 4.51L1.63 4.47L2.04 3.49L0.98 2.37L2.37 0.98L3.49 2.04z" fill="#7a7a7a"/><circle cx="5.5" cy="5.5" r="1.9" fill="#fff"/></svg>
<svg class="a" style="left:788.8px;top:183.05px" width="6.6" height="3.5"><path d="M0 0h6.6L3.3 3.5z" fill="#666"/></svg>
<div class="a" style="left:497.8px;top:207px;width:301.2px;height:16.8px;background:#fff;box-shadow:inset 0 0 0 1px #bdbdbd;"></div>
<div class="t" style="left:500px;top:210.8px;font-size:10px;transform:scaleX(0.88);color:#555;">Search</div>
<svg class="a" style="left:785.2px;top:209.3px" width="11" height="12" viewBox="0 0 11 12"><circle cx="6.6" cy="4.6" r="3.4" fill="none" stroke="#3a6fb0" stroke-width="1.3"/><path d="M4.2 7.2L1 10.6" stroke="#3a6fb0" stroke-width="1.8"/></svg>
<div class="a" style="left:497.8px;top:237px;width:301.2px;height:116.8px;background:#fff;"></div>
<div class="a" style="left:785.8px;top:237px;width:13.2px;height:116.8px;background:#f0f0f0;"></div>
<div class="a" style="left:786.4px;top:238.6px;width:12.2px;height:12.6px;background:#fff;box-shadow:inset 0 0 0 1px #cdcdcd;"></div>
<svg class="a" style="left:789.1px;top:242.8px" width="7" height="4.4" viewBox="0 0 7 4.4"><path d="M0 4.2L3.5 .3l3.5 3.9z" fill="#555"/></svg>
<div class="a" style="left:786.4px;top:287.8px;width:12.2px;height:21.2px;background:#fff;box-shadow:inset 0 0 0 1px #cdcdcd;"></div>
<div class="a" style="left:786.4px;top:339.3px;width:12.2px;height:12.7px;background:#fff;box-shadow:inset 0 0 0 1px #cdcdcd;"></div>
<svg class="a" style="left:789.1px;top:343.8px" width="7" height="4.4" viewBox="0 0 7 4.4"><path d="M0 .3L3.5 4.2 7 .3z" fill="#555"/></svg>
<div class="a" style="left:497.8px;top:237px;width:288px;height:116.8px;overflow:hidden;">
<div class="a" style="left:30.2px;top:1.8px;width:10.2px;height:10px;background:#fff;box-shadow:inset 0 0 0 1px #b2b2b2;"></div>
<div class="t" style="left:46px;top:2.7px;font-size:10.2px;transform:scaleX(0.92);color:#464646;">Header Create Date</div>
<div class="a" style="left:30.2px;top:20.1px;width:10.2px;height:10px;background:#fff;box-shadow:inset 0 0 0 1px #b2b2b2;"></div>
<svg class="a" style="left:30.2px;top:20.1px" width="10" height="10"><path d="M2 5.2l2.2 2.3L8.2 2.2" fill="none" stroke="#5a5a5a" stroke-width="1.1"/></svg>
<div class="t" style="left:46px;top:20.7px;font-size:10.2px;transform:scaleX(0.95);color:#222;font-weight:bold;">Header Doc Entry</div>
<div class="a" style="left:30.2px;top:38.4px;width:10.2px;height:10px;background:#fff;box-shadow:inset 0 0 0 1px #b2b2b2;"></div>
<div class="t" style="left:46px;top:38.7px;font-size:10.2px;transform:scaleX(0.96);color:#464646;">Header Doc Number</div>
<div class="a" style="left:30.2px;top:56.7px;width:10.2px;height:10px;background:#fff;box-shadow:inset 0 0 0 1px #b2b2b2;"></div>
<svg class="a" style="left:30.2px;top:56.7px" width="10" height="10"><path d="M2 5.2l2.2 2.3L8.2 2.2" fill="none" stroke="#5a5a5a" stroke-width="1.1"/></svg>
<div class="t" style="left:46px;top:57.7px;font-size:10.2px;transform:scaleX(0.97);color:#222;font-weight:bold;">Header Item Code</div>
<div class="a" style="left:30.2px;top:75px;width:10.2px;height:10px;background:#fff;box-shadow:inset 0 0 0 1px #b2b2b2;"></div>
<div class="t" style="left:46px;top:75.7px;font-size:10.2px;transform:scaleX(0.95);color:#464646;">Header Item Name</div>
<div class="a" style="left:30.2px;top:93.3px;width:10.2px;height:10px;background:#fff;box-shadow:inset 0 0 0 1px #b2b2b2;"></div>
<div class="t" style="left:46px;top:93.7px;font-size:10.2px;transform:scaleX(0.93);color:#464646;">Header Revision</div>
<div class="a" style="left:30.2px;top:111.6px;width:10.2px;height:10px;background:#fff;box-shadow:inset 0 0 0 1px #b2b2b2;"></div>
<div class="t" style="left:46px;top:111.7px;font-size:10.2px;transform:scaleX(0.94);color:#464646;">Header Status</div>
</div>
<div class="a" style="left:499px;top:362.5px;width:300px;height:1px;background:repeating-linear-gradient(90deg,#d6d6d6 0 1.5px,transparent 1.5px 3px);"></div>
<div class="t" style="left:501px;top:372.7px;font-size:10.2px;transform:scaleX(0.95);color:#3a3a3a;">Drag fields between areas below:</div>
<svg class="a" style="left:503.5px;top:400.8px" width="10" height="9" viewBox="0 0 10 9"><path d="M.3 .3h9.4L6 4.6V8.6L4 7.4V4.6z" fill="#8a8a8a"/></svg>
<div class="t" style="left:519.8px;top:400.8px;font-size:10px;transform:scaleX(0.84);color:#464646;">FILTERS</div>
<svg class="a" style="left:656px;top:400.6px" width="9" height="8" viewBox="0 0 9 8"><path d="M.8 0v8M3 0v8M5.2 0v8M7.4 0v8" stroke="#8f8f8f" stroke-width="1.3"/></svg>
<div class="t" style="left:671px;top:400.8px;font-size:10px;transform:scaleX(0.94);color:#464646;">COLUMNS</div>
<svg class="a" style="left:503.5px;top:506.4px" width="10" height="8" viewBox="0 0 10 8"><path d="M0 .8h9.4M0 2.9h9.4M0 5h9.4M0 7.1h9.4" stroke="#8e8e8e" stroke-width="1.25"/></svg>
<div class="t" style="left:519.8px;top:505.8px;font-size:10px;transform:scaleX(0.87);color:#464646;">ROWS</div>
<div class="t" style="left:655.6px;top:503.6px;font-size:13.5px;font-family:'Liberation Serif','DejaVu Serif',serif;color:#777;">Σ</div>
<div class="t" style="left:671px;top:505.8px;font-size:10px;transform:scaleX(0.88);color:#464646;">VALUES</div>
<div class="a" style="left:499.8px;top:415px;width:144.6px;height:78px;background:#fff;"></div>
<div class="a" style="left:652.2px;top:415px;width:147.6px;height:78px;background:#fff;"></div>
<div class="a" style="left:499.8px;top:521px;width:144.6px;height:64px;background:#fff;"></div>
<div class="a" style="left:652.2px;top:521px;width:147.6px;height:64px;background:#fff;"></div>
<div class="a" style="left:649.7px;top:398px;width:1px;height:187px;background:#d0d0d0;"></div>
<div class="a" style="left:499px;top:497.8px;width:301px;height:1px;background:#d0d0d0;"></div>
<div class="a" style="left:653px;top:416.2px;width:146px;height:15.6px;background:#fff;box-shadow:inset 0 0 0 1px #c9c9c9;"></div>
<div class="t" style="left:660.4px;top:417.2px;font-size:13px;font-family:'Liberation Serif','DejaVu Serif',serif;color:#666;">Σ</div>
<div class="t" style="left:673.8px;top:419.7px;font-size:10.2px;transform:scaleX(0.92);color:#333;">Values</div>
<svg class="a" style="left:784.2px;top:422.55px" width="6.8" height="3.7"><path d="M0 0h6.8L3.4 3.7z" fill="#111"/></svg>
<div class="a" style="left:501.8px;top:522.2px;width:142px;height:15px;background:#fff;box-shadow:inset 0 0 0 1px #c9c9c9;"></div>
<div class="t" style="left:507px;top:525.7px;font-size:10.2px;transform:scaleX(0.94);color:#333;">Header Doc Entry</div>
<svg class="a" style="left:629px;top:528.25px" width="6.8" height="3.7"><path d="M0 0h6.8L3.4 3.7z" fill="#111"/></svg>
<div class="a" style="left:501.8px;top:539.8px;width:142px;height:14.6px;background:#fff;box-shadow:inset 0 0 0 1px #c9c9c9;"></div>
<div class="t" style="left:507px;top:542.7px;font-size:10.2px;transform:scaleX(0.95);color:#333;">Header Item Code</div>
<svg class="a" style="left:629px;top:545.65px" width="6.8" height="3.7"><path d="M0 0h6.8L3.4 3.7z" fill="#111"/></svg>
<div class="a" style="left:653px;top:522.2px;width:146px;height:15px;background:#fff;box-shadow:inset 0 0 0 1px #c9c9c9;"></div>
<div class="t" style="left:659px;top:525.7px;font-size:10.2px;transform:scaleX(0.98);color:#333;">Quantity</div>
<svg class="a" style="left:784.2px;top:528.25px" width="6.8" height="3.7"><path d="M0 0h6.8L3.4 3.7z" fill="#111"/></svg>
<div class="a" style="left:653px;top:539.8px;width:146px;height:14.6px;background:#fff;box-shadow:inset 0 0 0 1px #c9c9c9;"></div>
<div class="t" style="left:659px;top:542.7px;font-size:10.2px;transform:scaleX(0.97);color:#333;">Total Value</div>
<svg class="a" style="left:784.2px;top:545.65px" width="6.8" height="3.7"><path d="M0 0h6.8L3.4 3.7z" fill="#111"/></svg>
<div class="a" style="left:809.6px;top:19px;width:1.2px;height:566px;background:#f1f1f1;"></div>
<div class="a" style="left:810.7px;top:0px;width:1.3px;height:585px;background:#2f7a55;"></div>
<div class="a" style="left:810.7px;top:0px;width:1.3px;height:19px;background:#217346;"></div>
</body></html>
